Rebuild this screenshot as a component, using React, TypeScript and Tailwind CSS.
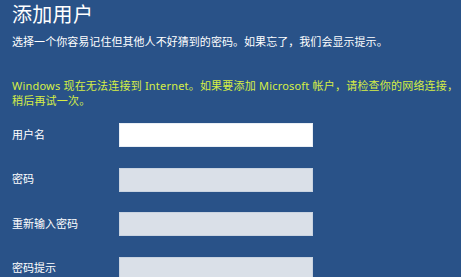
const fields = [
  { label: "用户名", active: true },
  { label: "密码", active: false },
  { label: "重新输入密码", active: false },
  { label: "密码提示", active: false },
];

export default function App() {
  return (
    <div
      className="w-[461px] h-[277px] overflow-hidden bg-[#295288] pl-[12px] text-white"
      style={{ fontFamily: '"Noto Sans", "Noto Sans CJK SC", sans-serif' }}
    >
      <h1 className="pt-[2px] text-[20px] leading-[26px] font-normal tracking-[0.3px]">添加用户</h1>
      <p className="mt-[6px] text-[11px] leading-[16px] tracking-[0.05px] whitespace-nowrap">
        选择一个你容易记住但其他人不好猜到的密码。如果忘了，我们会显示提示。
      </p>
      <p className="mt-[28px] text-[11px] leading-[15px] tracking-[0.2px] text-[#d6ee45] whitespace-nowrap">
        Windows 现在无法连接到 Internet。如果要添加 Microsoft 帐户，请检查你的网络连接，
        <br />
        稍后再试一次。
      </p>
      <div className="mt-[15px] flex flex-col gap-[20.5px]">
        {fields.map((f) => (
          <div key={f.label} className="flex items-center">
            <label className="w-[107px] text-[11px]">{f.label}</label>
            <div
              className={
                f.active
                  ? "w-[194px] h-[24px] bg-white border border-[#e8eef5]"
                  : "w-[194px] h-[24px] bg-[#dae0e8] border border-[#c9d3e0]"
              }
            />
          </div>
        ))}
      </div>
    </div>
  );
}
